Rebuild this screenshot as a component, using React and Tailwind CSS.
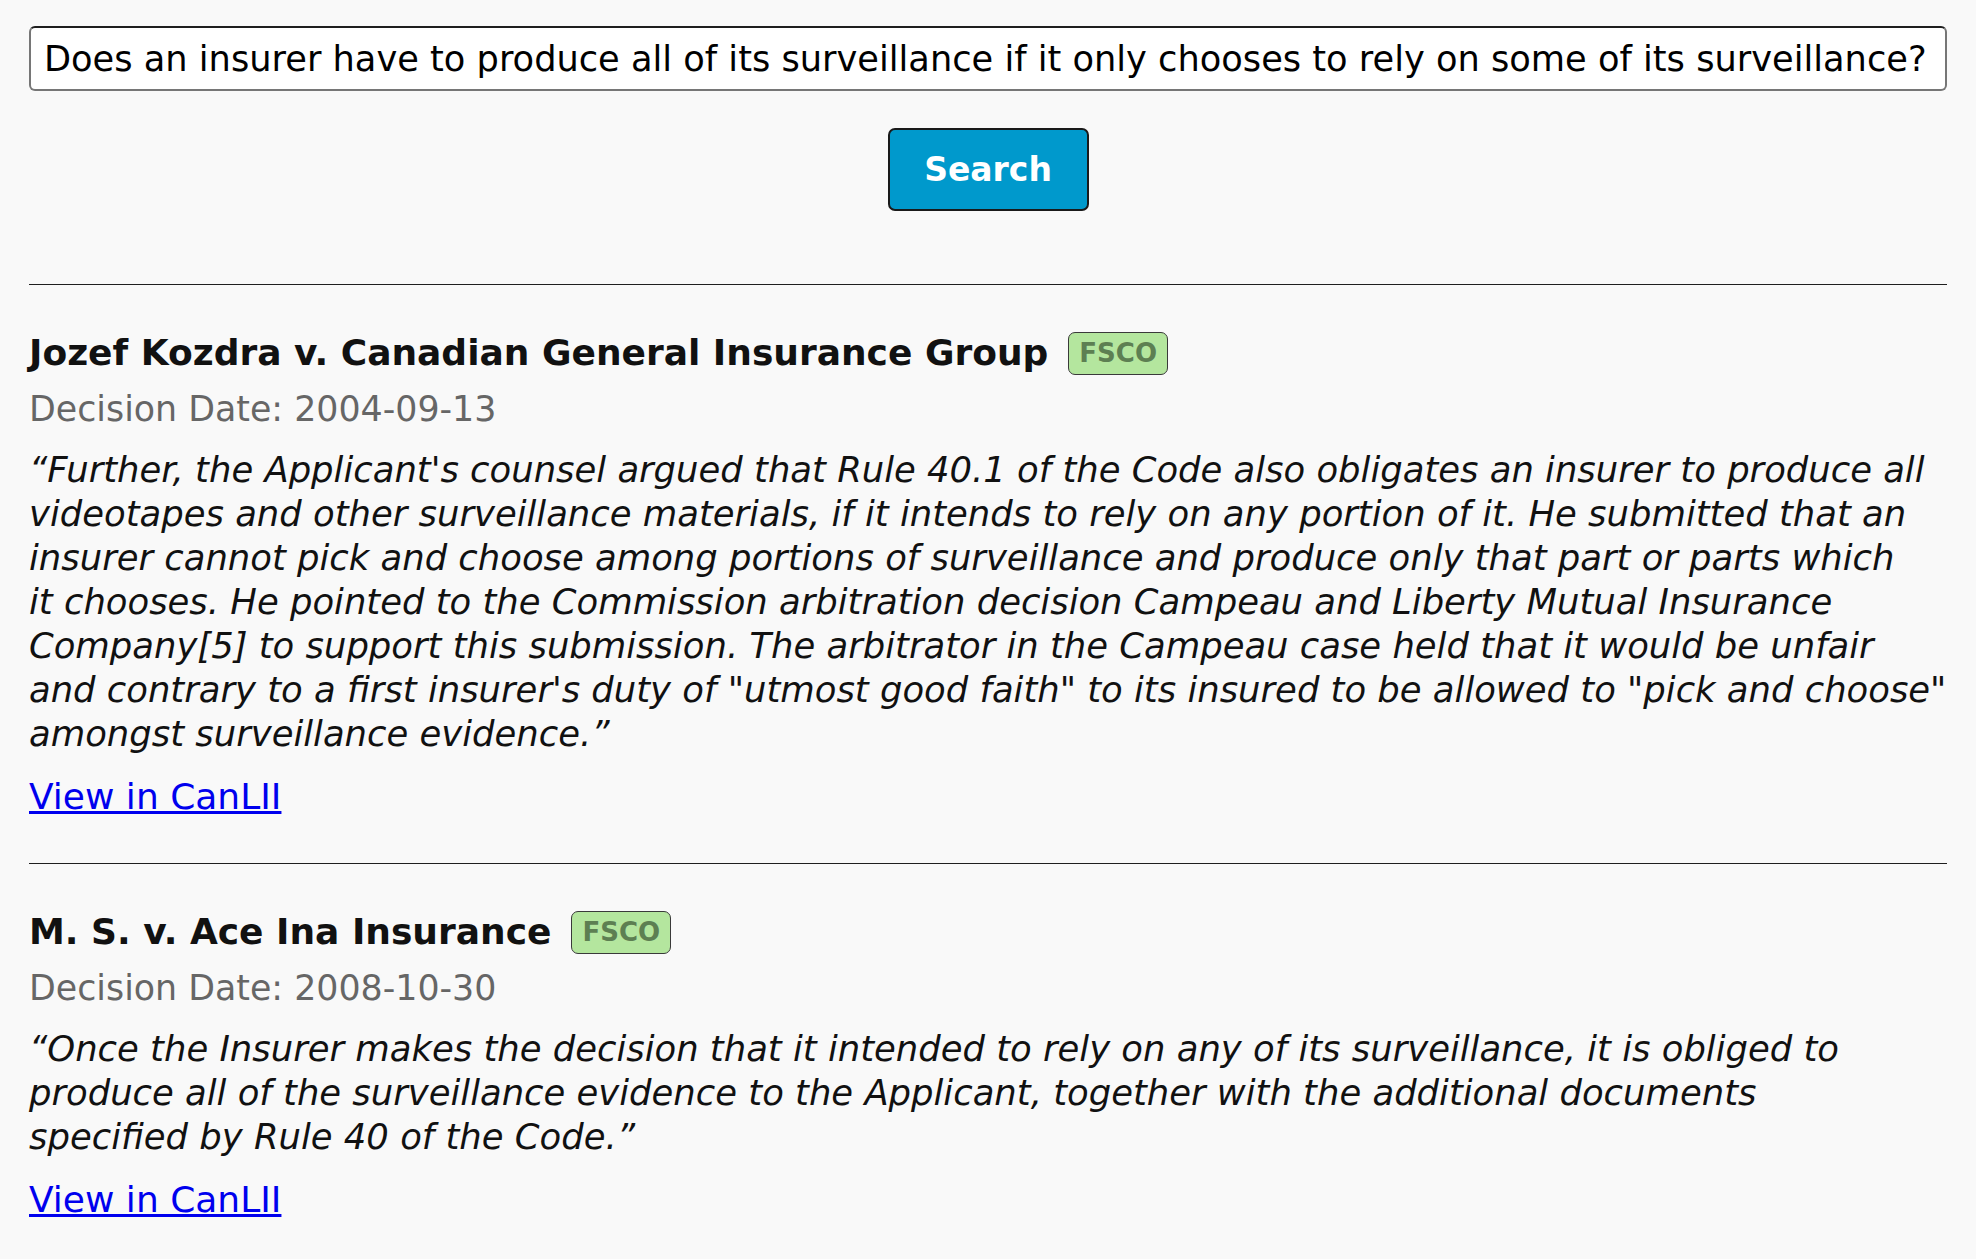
import { useState } from 'react'

// quote lines kept as in the source layout so wrapping matches
const results = [
  {
    title: 'Jozef Kozdra v. Canadian General Insurance Group',
    tribunal: 'FSCO',
    date: '2004-09-13',
    quote: [
      '\u201cFurther, the Applicant\'s counsel argued that Rule 40.1 of the Code also obligates an insurer to produce all',
      'videotapes and other surveillance materials, if it intends to rely on any portion of it. He submitted that an',
      'insurer cannot pick and choose among portions of surveillance and produce only that part or parts which',
      'it chooses. He pointed to the Commission arbitration decision Campeau and Liberty Mutual Insurance',
      'Company[5] to support this submission. The arbitrator in the Campeau case held that it would be unfair',
      'and contrary to a first insurer\'s duty of "utmost good faith" to its insured to be allowed to "pick and choose"',
      'amongst surveillance evidence.\u201d',
    ],
  },
  {
    title: 'M. S. v. Ace Ina Insurance',
    tribunal: 'FSCO',
    date: '2008-10-30',
    quote: [
      '\u201cOnce the Insurer makes the decision that it intended to rely on any of its surveillance, it is obliged to',
      'produce all of the surveillance evidence to the Applicant, together with the additional documents',
      'specified by Rule 40 of the Code.\u201d',
    ],
  },
]

function Result({ item }) {
  return (
    <div className="border-t border-[#1f1f1f] pt-[46px] pb-[44px]">
      <div className="flex h-[44px] items-center gap-[20px]">
        <h2 className="text-[36px] font-bold leading-[44px] text-[#111]">{item.title}</h2>
        <span className="flex h-[43px] items-center rounded-[7px] border border-[#3a3a3a] bg-[#b4e69e] px-[10px] text-[26px] font-bold text-[#5d7f52]">
          {item.tribunal}
        </span>
      </div>
      <p className="mt-[12px] text-[34.8px] leading-[44px] text-[#666]">Decision Date: {item.date}</p>
      <p className="mt-[17px] text-[35.4px] italic leading-[44px] text-[#111]">
        {item.quote.map((line, i) => (
          <span key={i} className="block whitespace-nowrap">
            {line}
          </span>
        ))}
      </p>
      <a href="#" className="mt-[19px] block w-fit text-[36px] leading-[44px] text-[#0000ee] underline">
        View in CanLII
      </a>
    </div>
  )
}

export default function App() {
  const [query, setQuery] = useState(
    'Does an insurer have to produce all of its surveillance if it only chooses to rely on some of its surveillance?'
  )

  return (
    <div className="min-h-screen bg-[#f9f9f9] px-[29px] pt-[26px]" style={{ fontFamily: '"DejaVu Sans", sans-serif' }}>
      <input
        className="block h-[65px] w-full rounded-[6px] border-2 border-[#767676] border-t-[#1f1f1f] bg-white px-[13px] text-[35.2px] text-black outline-none"
        value={query}
        onChange={(e) => setQuery(e.target.value)}
      />
      <div className="mt-[37px] flex justify-center">
        <button className="h-[83px] w-[201px] rounded-[7px] border-2 border-[#1a1a1a] bg-[#0099cc] text-[33px] font-bold text-white">
          Search
        </button>
      </div>
      <div className="mt-[73px]">
        {results.map((r) => (
          <Result key={r.title} item={r} />
        ))}
      </div>
    </div>
  )
}
